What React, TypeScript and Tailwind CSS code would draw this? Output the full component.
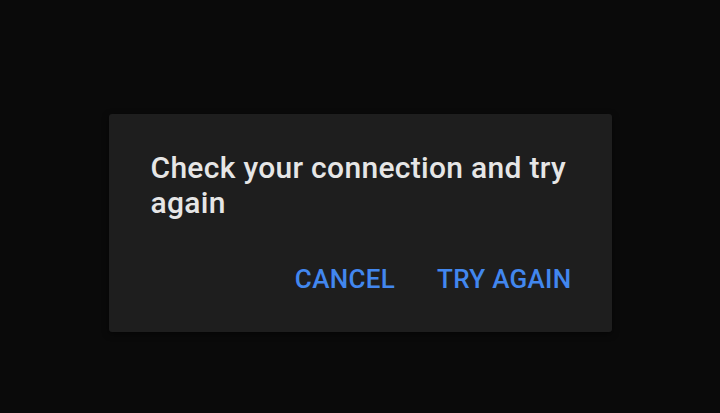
export default function App() {
  return (
    <div className="min-h-[413px] w-full bg-[#0a0a0a] pt-[114px] font-['Roboto',sans-serif]">
      <div className="mx-auto h-[218px] w-[503px] rounded-[3px] bg-[#1e1e1e] pl-[42px] pr-[40px] pt-[36px] shadow-[0_2px_6px_rgba(0,0,0,0.5)]">
        <p className="text-[30px] font-medium leading-[35px] tracking-[0.3px] text-[#e6e6e6]">
          Check your connection and try again
        </p>
        <div className="mt-[44px] flex justify-end gap-[42px] text-[26px] font-medium leading-[30px] tracking-[0.3px] text-[#4287ee]">
          <button>CANCEL</button>
          <button>TRY AGAIN</button>
        </div>
      </div>
    </div>
  );
}
